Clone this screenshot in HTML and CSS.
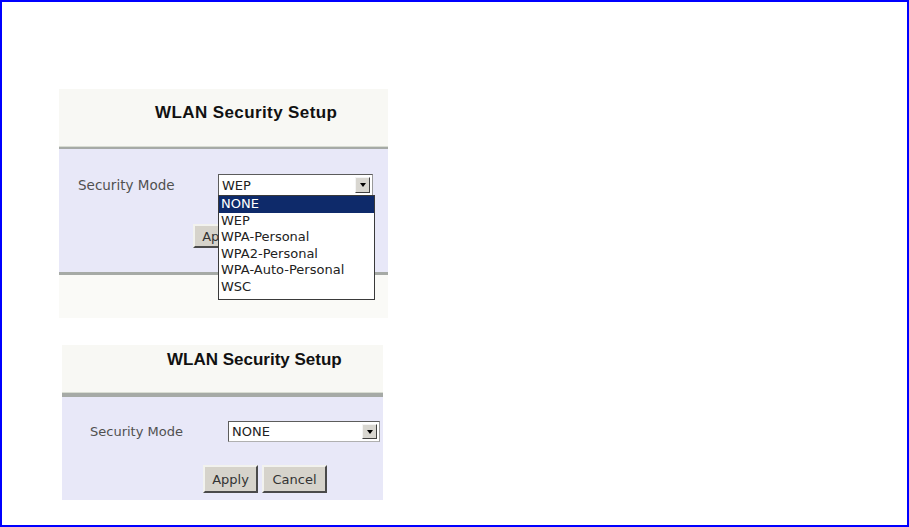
FILE: index.html
```html
<!DOCTYPE html>
<html lang="en">
<head>
  <meta charset="UTF-8">
  <meta name="viewport" content="width=device-width, initial-scale=1.0">
  <title>WLAN Security Setup</title>
  <link rel="stylesheet" href="styles.css">
</head>
<body>
  <div class="frame">

    <!-- Screenshot 1: dropdown open -->
    <div class="panel panel-open">
      <div class="panel-head"><h2>WLAN Security Setup</h2></div>
      <div class="panel-body">
        <div class="field">
          <span class="field-label">Security Mode</span>
          <div class="select">
            <span class="select-value">WEP</span>
            <span class="select-arrow"></span>
            <ul class="select-list">
              <li class="selected">NONE</li>
              <li>WEP</li>
              <li>WPA-Personal</li>
              <li>WPA2-Personal</li>
              <li>WPA-Auto-Personal</li>
              <li>WSC</li>
            </ul>
          </div>
        </div>
        <div class="actions">
          <button class="btn">Apply</button>
        </div>
      </div>
      <div class="panel-foot"></div>
    </div>

    <!-- Screenshot 2: NONE selected -->
    <div class="panel panel-closed">
      <div class="panel-head"><h2>WLAN Security Setup</h2></div>
      <div class="panel-body">
        <div class="field">
          <span class="field-label">Security Mode</span>
          <div class="select">
            <span class="select-value">NONE</span>
            <span class="select-arrow"></span>
          </div>
        </div>
        <div class="actions">
          <button class="btn">Apply</button>
          <button class="btn btn-wide">Cancel</button>
        </div>
      </div>
    </div>

  </div>
</body>
</html>
```

FILE: styles.css
```css
/* General Styling */
body {
  margin: 0;
  padding: 0;
  background: #fff;
  font-family: 'DejaVu Sans', Verdana, sans-serif;
}

.frame {
  width: 909px;
  height: 527px;
  box-sizing: border-box;
  border: 2px solid #0000ff;
  overflow: hidden;
}

/* Panels */
.panel {
  background: #fafaf7;
}

.panel-head {
  background: #f8f8f4;
  border-bottom: 1px solid #d8dcd2;
  box-sizing: border-box;
}

.panel-head h2 {
  margin: 0;
  font-family: 'Liberation Sans', Arial, sans-serif;
  font-size: 17px;
  line-height: 20px;
  font-weight: bold;
  color: #111;
}

.panel-body {
  background: #e8e8f8;
  border-top: 2px solid #a6aaa6;
  box-sizing: border-box;
}

.field {
  display: flex;
  align-items: center;
}

.field-label {
  color: #505050;
  font-size: 13px;
}

/* Select box */
.select {
  position: relative;
  display: flex;
  align-items: center;
  box-sizing: border-box;
  background: #fff;
  border: 1px solid #5c5c5c;
  border-right-color: #9a9a9a;
  border-bottom-color: #b0b0b0;
}

.select-value {
  flex: 1;
  padding-left: 3px;
  font-size: 13px;
  color: #222;
}

.select-arrow {
  width: 15px;
  height: calc(100% - 4px);
  margin-right: 2px;
  box-sizing: border-box;
  background: #d8d6d0;
  border: 1px solid;
  border-color: #f4f4f4 #404040 #404040 #f4f4f4;
  display: flex;
  align-items: center;
  justify-content: center;
}

.select-arrow::after {
  content: '';
  border-left: 3px solid transparent;
  border-right: 3px solid transparent;
  border-top: 4px solid #000;
}

.select-list {
  position: absolute;
  top: 100%;
  left: -1px;
  width: 155px;
  margin: 0;
  padding: 0 0 4px;
  list-style: none;
  background: #fff;
  border: 1px solid #3a3a3a;
  z-index: 2;
}

.select-list li {
  padding-left: 2px;
  font-size: 13px;
  line-height: 16.5px;
  color: #222;
}

.select-list li.selected {
  background: #0e2a6a;
  color: #fff;
}

/* Buttons */
.actions {
  display: flex;
  gap: 4px;
}

.btn {
  box-sizing: border-box;
  width: 55px;
  padding: 0;
  background: #d6d3cb;
  border: 2px solid;
  border-color: #f2f2ee #4a4a4a #4a4a4a #f2f2ee;
  font-family: 'DejaVu Sans', Verdana, sans-serif;
  font-size: 13px;
  color: #333;
}

.btn-wide {
  width: 65px;
}

/* Screenshot 1 sizes */
.panel-open {
  width: 329px;
  margin: 87px 0 0 57px;
}

.panel-open .panel-head {
  height: 58px;
  padding: 14px 0 0 96px;
}

.panel-open .panel-head h2 {
  letter-spacing: 0.4px;
}

.panel-open .panel-body {
  height: 128px;
  padding-top: 25px;
  border-bottom: 3px solid #a6aaa6;
}

.panel-open .field-label {
  width: 140px;
  margin-left: 19px;
  font-size: 13.5px;
}

.panel-open .select {
  width: 155px;
  height: 22px;
}

.panel-open .actions {
  margin: 28px 0 0 134px;
}

.panel-open .btn {
  height: 24px;
}

.panel-foot {
  height: 43px;
  background: #fafaf7;
}

/* Screenshot 2 sizes */
.panel-closed {
  width: 321px;
  margin: 27px 0 0 60px;
}

.panel-closed .panel-head {
  height: 48px;
  padding: 5px 0 0 105px;
}

.panel-closed .panel-body {
  height: 107px;
  padding-top: 24px;
  border-top-width: 4px;
}

.panel-closed .field-label {
  width: 138px;
  margin-left: 28px;
}

.panel-closed .select {
  width: 152px;
  height: 21px;
}

.panel-closed .actions {
  margin: 23px 0 0 141px;
}

.panel-closed .btn {
  height: 28px;
}
```
